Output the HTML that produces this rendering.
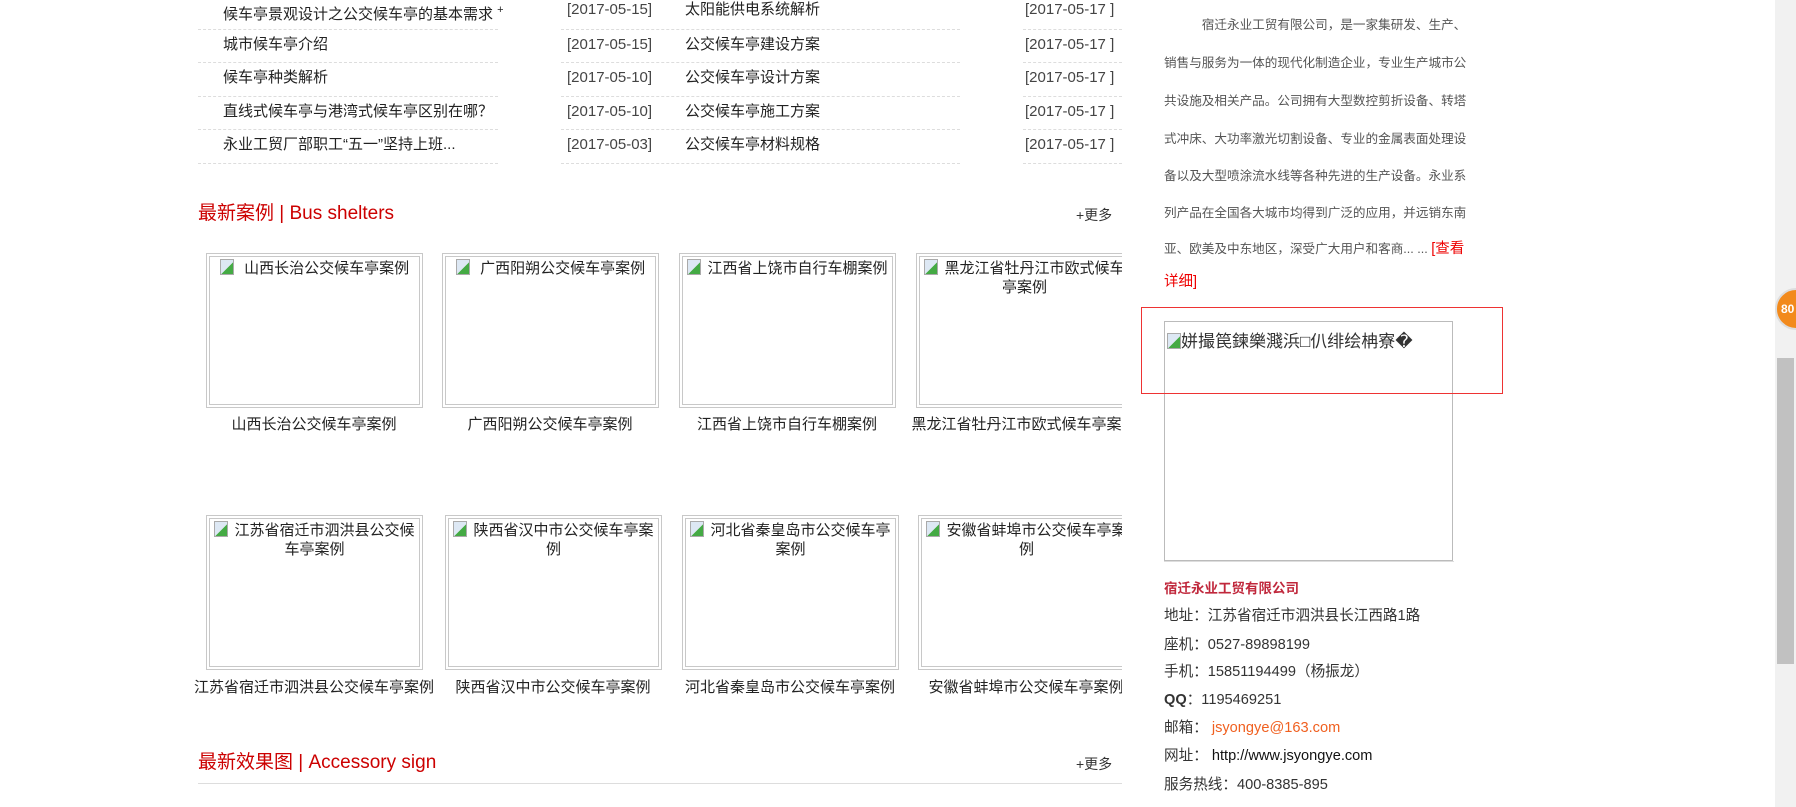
<!DOCTYPE html>
<html><head><meta charset="utf-8"><style>
*{margin:0;padding:0;box-sizing:border-box}
body{width:1796px;height:807px;overflow:hidden;background:#fff;font-family:"Liberation Sans","Noto Sans CJK SC",sans-serif;color:#333;position:relative}
.a{position:absolute;white-space:nowrap}
.t{font-size:15px;line-height:20px;color:#222}
.d{font-size:15px;line-height:20px;color:#444}
.dl{position:absolute;height:0;border-top:1px dashed #ddd}
.h{font-size:19px;color:#c00;line-height:24px}
.more{font-size:14px;color:#333}
.box{position:absolute;border:1px solid #c8c8c8;padding:2px;width:217px;height:155px}
.box .in{border:1px solid #c8c8c8;width:100%;height:100%;text-align:center;font-size:15px;line-height:19px;color:#222;padding:2px 4px;overflow:hidden}
.bi{display:inline-block;width:14px;height:16px;border:1px solid #aaa;background:linear-gradient(135deg,#dde8f4 55%,#4a4 56%);vertical-align:-2px;margin-right:6px}
.cap{position:absolute;width:300px;text-align:center;font-size:15px;color:#222;line-height:20px}
.r{font-size:12.6px;color:#555;line-height:20px}
.c{font-size:14.6px;color:#333;line-height:20px}
</style></head><body>
<!-- list 1 -->
<div class="a t" style="left:223px;top:0">候车亭景观设计之公交候车亭的基本需求 <sup style="font-size:11px">+</sup></div>
<div class="a t" style="left:223px;top:35px">城市候车亭介绍</div>
<div class="a t" style="left:223px;top:68px">候车亭种类解析</div>
<div class="a t" style="left:223px;top:102px">直线式候车亭与港湾式候车亭区别在哪？</div>
<div class="a t" style="left:223px;top:135px">永业工贸厂部职工“五一”坚持上班...</div>
<div class="a d" style="left:567px;top:0">[2017-05-15]</div>
<div class="a d" style="left:567px;top:35px">[2017-05-15]</div>
<div class="a d" style="left:567px;top:68px">[2017-05-10]</div>
<div class="a d" style="left:567px;top:102px">[2017-05-10]</div>
<div class="a d" style="left:567px;top:135px">[2017-05-03]</div>
<div class="a t" style="left:685px;top:0">太阳能供电系统解析</div>
<div class="a t" style="left:685px;top:35px">公交候车亭建设方案</div>
<div class="a t" style="left:685px;top:68px">公交候车亭设计方案</div>
<div class="a t" style="left:685px;top:102px">公交候车亭施工方案</div>
<div class="a t" style="left:685px;top:135px">公交候车亭材料规格</div>
<div class="a d" style="left:1025px;top:0">[2017-05-17 ]</div>
<div class="a d" style="left:1025px;top:35px">[2017-05-17 ]</div>
<div class="a d" style="left:1025px;top:68px">[2017-05-17 ]</div>
<div class="a d" style="left:1025px;top:102px">[2017-05-17 ]</div>
<div class="a d" style="left:1025px;top:135px">[2017-05-17 ]</div>
<div class="dl" style="left:198px;width:300px;top:29px"></div>
<div class="dl" style="left:198px;width:300px;top:62px"></div>
<div class="dl" style="left:198px;width:300px;top:96px"></div>
<div class="dl" style="left:198px;width:300px;top:129px"></div>
<div class="dl" style="left:198px;width:300px;top:163px"></div>
<div class="dl" style="left:561px;width:399px;top:29px"></div>
<div class="dl" style="left:561px;width:399px;top:62px"></div>
<div class="dl" style="left:561px;width:399px;top:96px"></div>
<div class="dl" style="left:561px;width:399px;top:129px"></div>
<div class="dl" style="left:561px;width:399px;top:163px"></div>
<div class="dl" style="left:1023px;width:99px;top:29px"></div>
<div class="dl" style="left:1023px;width:99px;top:62px"></div>
<div class="dl" style="left:1023px;width:99px;top:96px"></div>
<div class="dl" style="left:1023px;width:99px;top:129px"></div>
<div class="dl" style="left:1023px;width:99px;top:163px"></div>

<div class="a h" style="left:198px;top:202px">最新案例 | Bus shelters</div>
<div class="a more" style="left:1076px;top:205px">+更多</div>

<div style="position:absolute;left:0;top:0;width:1122px;height:807px;overflow:hidden">
<div class="box" style="left:206px;top:253px"><div class="in"><span class="bi"></span> 山西长治公交候车亭案例</div></div>
<div class="box" style="left:442px;top:253px"><div class="in"><span class="bi"></span> 广西阳朔公交候车亭案例</div></div>
<div class="box" style="left:679px;top:253px"><div class="in"><span class="bi"></span>江西省上饶市自行车棚案例</div></div>
<div class="box" style="left:916px;top:253px"><div class="in"><span class="bi"></span>黑龙江省牡丹江市欧式候车亭案例</div></div>
<div class="cap" style="left:164px;top:415px">山西长治公交候车亭案例</div>
<div class="cap" style="left:400px;top:415px">广西阳朔公交候车亭案例</div>
<div class="cap" style="left:637px;top:415px">江西省上饶市自行车棚案例</div>
<div class="cap" style="left:874px;top:415px">黑龙江省牡丹江市欧式候车亭案例</div>

<div class="box" style="left:206px;top:515px"><div class="in"><span class="bi"></span>江苏省宿迁市泗洪县公交候车亭案例</div></div>
<div class="box" style="left:445px;top:515px"><div class="in"><span class="bi"></span>陕西省汉中市公交候车亭案例</div></div>
<div class="box" style="left:682px;top:515px"><div class="in"><span class="bi"></span>河北省秦皇岛市公交候车亭案例</div></div>
<div class="box" style="left:918px;top:515px"><div class="in"><span class="bi"></span>安徽省蚌埠市公交候车亭案例</div></div>
<div class="cap" style="left:164px;top:678px">江苏省宿迁市泗洪县公交候车亭案例</div>
<div class="cap" style="left:403px;top:678px">陕西省汉中市公交候车亭案例</div>
<div class="cap" style="left:640px;top:678px">河北省秦皇岛市公交候车亭案例</div>
<div class="cap" style="left:876px;top:678px">安徽省蚌埠市公交候车亭案例</div>
</div>

<div class="a h" style="left:198px;top:751px">最新效果图 | Accessory sign</div>
<div class="a more" style="left:1076px;top:754px">+更多</div>
<div style="position:absolute;left:198px;top:783px;width:924px;border-top:1px solid #ddd"></div>

<!-- right column -->
<div class="a r" style="left:1164px;top:15px">　　　宿迁永业工贸有限公司，是一家集研发、生产、</div>
<div class="a r" style="left:1164px;top:53px">销售与服务为一体的现代化制造企业，专业生产城市公</div>
<div class="a r" style="left:1164px;top:91px">共设施及相关产品。公司拥有大型数控剪折设备、转塔</div>
<div class="a r" style="left:1164px;top:129px">式冲床、大功率激光切割设备、专业的金属表面处理设</div>
<div class="a r" style="left:1164px;top:166px">备以及大型喷涂流水线等各种先进的生产设备。永业系</div>
<div class="a r" style="left:1164px;top:203px">列产品在全国各大城市均得到广泛的应用，并远销东南</div>
<div class="a r" style="left:1164px;top:239px">亚、欧美及中东地区，深受广大用户和客商... ... <span style="color:#e00;font-size:14.5px">[查看</span></div>
<div class="a" style="left:1164px;top:272px;color:#e00;font-size:14.5px;line-height:20px">详细]</div>

<div style="position:absolute;left:1164px;top:321px;width:289px;height:240px;border:1px solid #bbb"></div>
<div class="a" style="left:1167px;top:331px;font-size:17px;color:#333;line-height:22px"><span class="bi" style="margin-right:0"></span>姘撮笢鍊樂濺浜□仈绯绘柟寮�</div>
<div style="position:absolute;left:1141px;top:307px;width:362px;height:87px;border:1px solid #e33"></div>
<div style="position:absolute;left:1164px;top:561px;width:290px;border-top:1px solid #ddd"></div>

<div class="a" style="left:1164px;top:579px;font-size:13.5px;font-weight:bold;color:#c0283c;line-height:20px">宿迁永业工贸有限公司</div>
<div class="a c" style="left:1164px;top:606px">地址：江苏省宿迁市泗洪县长江西路1路</div>
<div class="a c" style="left:1164px;top:635px">座机：0527-89898199</div>
<div class="a c" style="left:1164px;top:662px">手机：15851194499（杨振龙）</div>
<div class="a c" style="left:1164px;top:690px"><b>QQ</b>：1195469251</div>
<div class="a c" style="left:1164px;top:718px">邮箱： <span style="color:#f06020">jsyongye@163.com</span></div>
<div class="a c" style="left:1164px;top:746px">网址： <span style="color:#111">http://www.jsyongye.com</span></div>
<div class="a c" style="left:1164px;top:775px">服务热线：400-8385-895</div>

<!-- scrollbar -->
<div style="position:absolute;left:1775px;top:0;width:21px;height:807px;background:#f1f1f1"></div>
<div style="position:absolute;left:1777px;top:358px;width:17px;height:306px;background:#c1c1c1"></div>
<div style="position:absolute;left:1775px;top:288px;width:42px;height:42px;border-radius:50%;background:#f28a1c;border:2px solid #ddd;color:#fff;font-size:12px;font-weight:bold;line-height:38px;padding-left:4px">80</div>
</body></html>
